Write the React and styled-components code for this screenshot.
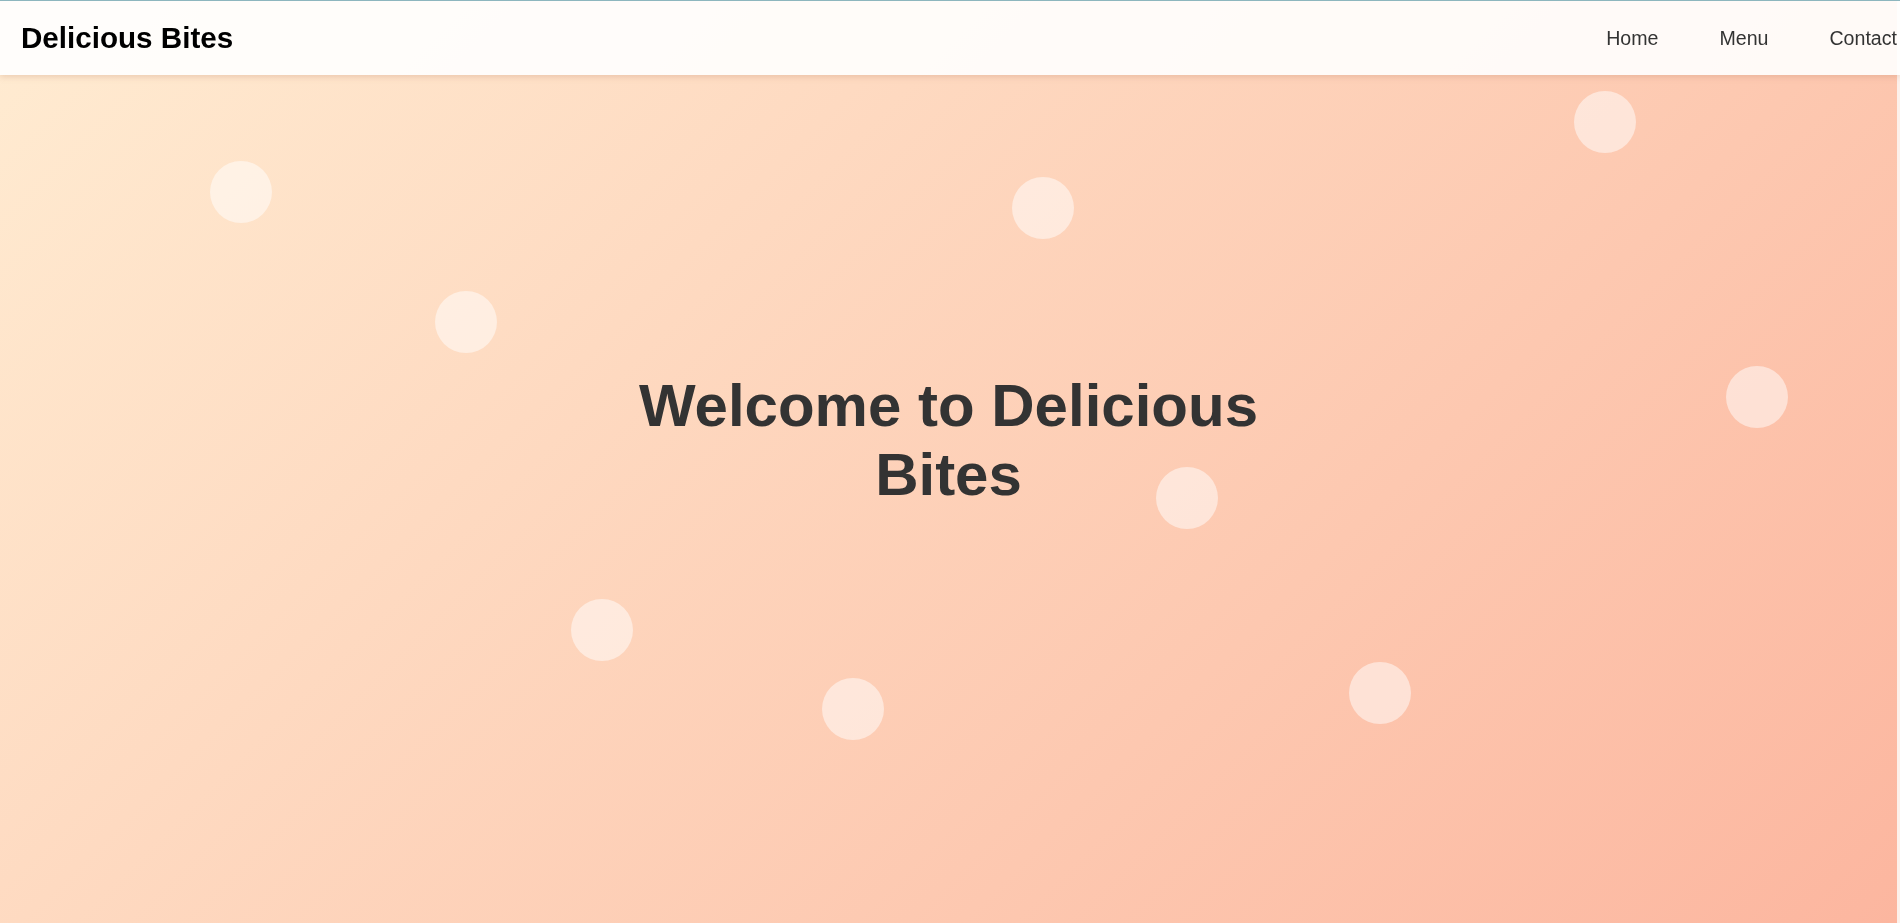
import React from 'react'
import styled, { createGlobalStyle } from 'styled-components'

const GlobalStyle = createGlobalStyle`
  * {
    box-sizing: border-box;
  }

  body {
    margin: 0;
    font-family: 'Liberation Sans', Arial, sans-serif;
    background: #fdf1eb;
    overflow: hidden;
  }
`

const Page = styled.div`
  position: relative;
  margin-right: 3px;
`

const Header = styled.header`
  position: fixed;
  top: 0;
  left: 0;
  right: 0;
  z-index: 10;
  height: 75px;
  display: flex;
  align-items: center;
  justify-content: space-between;
  padding: 0 0 0 21px;
  background: rgba(255, 255, 255, 0.9);
  border-top: 1px solid #8db6be;
  box-shadow: 0 2px 6px rgba(180, 120, 90, 0.25);
`

const Logo = styled.div`
  font-size: 29.6px;
  font-weight: 700;
  color: #000;
`

const Nav = styled.nav`
  display: flex;
  gap: 61px;
  margin-right: 3px;
`

const NavLink = styled.a`
  font-size: 19.6px;
  color: #333;
  text-decoration: none;
  cursor: pointer;
`

const Hero = styled.section`
  position: relative;
  height: 100vh;
  overflow: hidden;
  display: flex;
  align-items: center;
  justify-content: center;
  padding-bottom: 44px;
  background: linear-gradient(135deg, #ffecd2 0%, #fcb69f 100%);
`

const Bubble = styled.span`
  position: absolute;
  width: 62px;
  height: 62px;
  border-radius: 50%;
  background: rgba(255, 255, 255, 0.5);
`

const Title = styled.h1`
  margin: 0;
  max-width: 700px;
  text-align: center;
  font-size: 60px;
  font-weight: 700;
  color: #333;
  line-height: normal;
`

const bubbles = [
  [241, 192],
  [466, 322],
  [1043, 208],
  [1605, 122],
  [1757, 397],
  [1187, 498],
  [602, 630],
  [853, 709],
  [1380, 693]
]

const App = () => (
  <Page>
    <GlobalStyle />
    <Header>
      <Logo>Delicious Bites</Logo>
      <Nav>
        <NavLink>Home</NavLink>
        <NavLink>Menu</NavLink>
        <NavLink>Contact</NavLink>
      </Nav>
    </Header>
    <Hero>
      {bubbles.map(([x, y], i) => (
        <Bubble key={i} style={{ left: x - 31, top: y - 31 }} />
      ))}
      <Title>Welcome to Delicious Bites</Title>
    </Hero>
  </Page>
)

export default App
